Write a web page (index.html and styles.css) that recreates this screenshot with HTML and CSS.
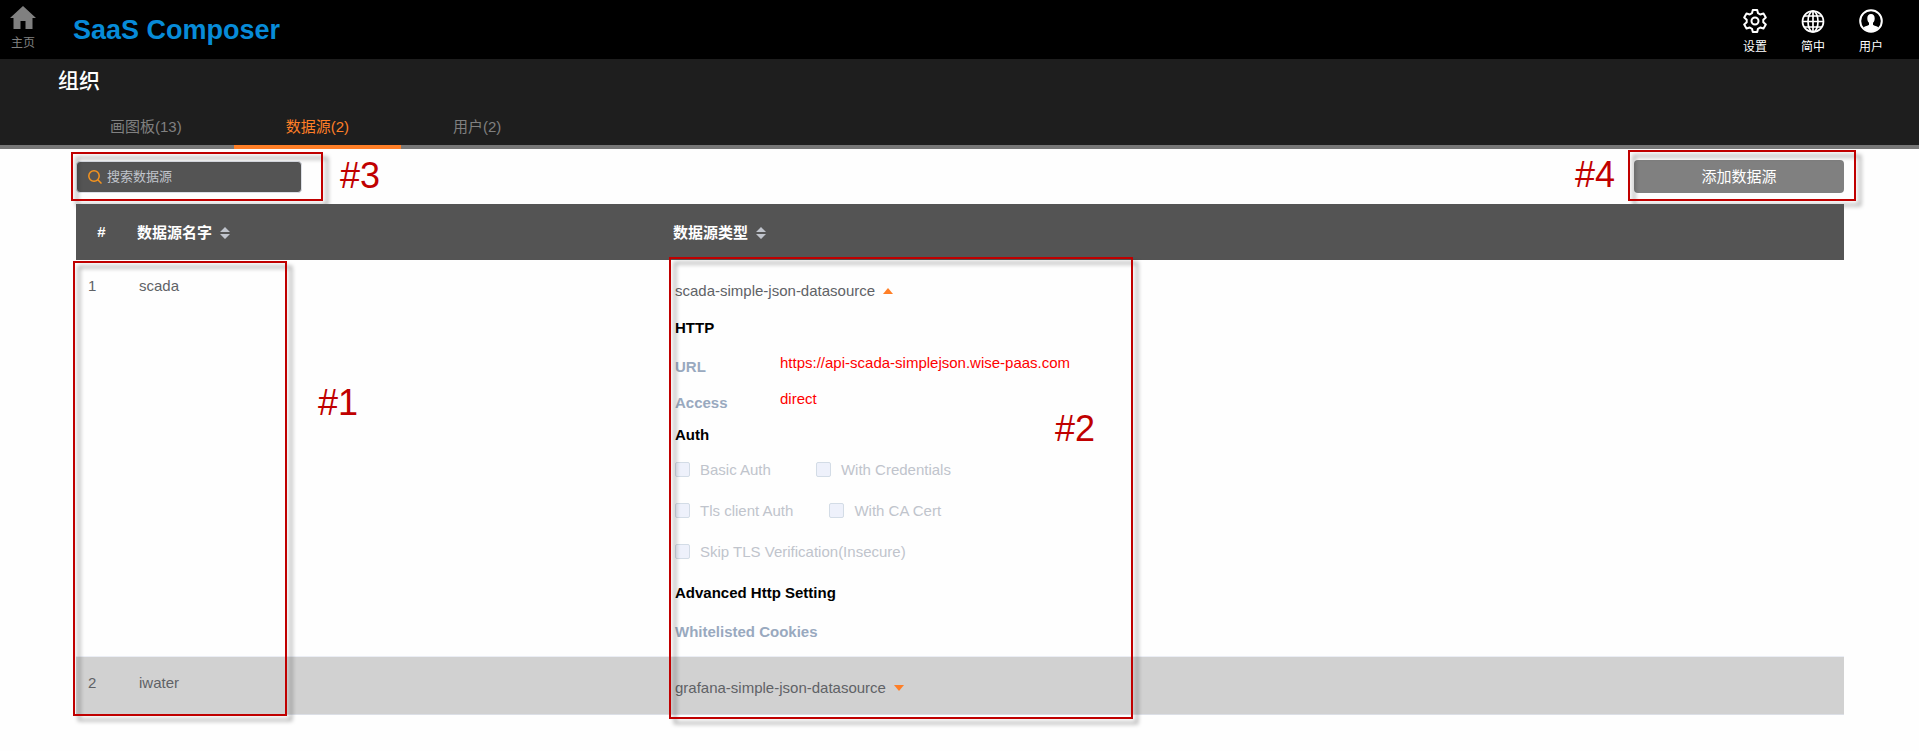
FILE: index.html
```html
<!DOCTYPE html>
<html lang="zh-CN">
<head>
<meta charset="utf-8">
<title>SaaS Composer</title>
<link rel="stylesheet" href="styles.css">
</head>
<body>
<header class="topbar">
  <a class="icon-link home" href="#">
    <svg width="26" height="23" viewBox="0 0 26 23"><path d="M13 0L0 12h3.500v11h7v-8h5v8h7V12H26z" fill="currentColor"/></svg>
    <span>主页</span>
  </a>
  <a class="brand" href="#">SaaS Composer</a>
  <nav class="actions">
    <a class="icon-link" href="#">
      <svg width="24" height="24" viewBox="0 0 24 24" fill="none" stroke="currentColor" stroke-width="2" stroke-linejoin="round"><path d="M9.800 1h4.400l.8 3.200 2.200 1.300 3.300-1 2.300 3.900-2.500 2.300v2.600l2.500 2.300-2.300 3.900-3.300-1-2.200 1.300-.8 3.200H9.800L9 19.800l-2.200-1.300-3.300 1-2.300-3.900 2.500-2.300v-2.600L1.200 8.400l2.300-3.900 3.300 1L9 4.200z"/><circle cx="12" cy="12" r="3.500"/></svg>
      <span>设置</span>
    </a>
    <a class="icon-link" href="#">
      <svg width="24" height="24" viewBox="0 0 24 24" fill="none" stroke="currentColor" stroke-width="1.700"><circle cx="12" cy="12.500" r="10.500"/><ellipse cx="12" cy="12.500" rx="5" ry="10.500"/><path d="M12 2v21M1.500 12.500h21M3.200 7h17.600M3.200 18h17.600"/></svg>
      <span>简中</span>
    </a>
    <a class="icon-link" href="#">
      <svg width="24" height="24" viewBox="0 0 24 24"><circle cx="12" cy="12" r="10.800" fill="none" stroke="currentColor" stroke-width="2"/><path d="M12 5c-2.500 0-3.700 1.700-3.700 4.200 0 2 .6 3.500 1.700 4.500v2c-1 1-4 1.200-5.500 2.800C6 21 9 22.500 12 22.500s6-1.500 7.500-4C18 16.900 15 16.700 14 15.700v-2c1.100-1 1.700-2.500 1.700-4.500C15.700 6.700 14.500 5 12 5z" fill="currentColor"/></svg>
      <span>用户</span>
    </a>
  </nav>
</header>

<section class="subhead">
  <h1 class="title">组织</h1>
  <nav class="tabs">
    <a class="tab" href="#">画图板(13)</a>
    <a class="tab active" href="#" aria-current="page">数据源(2)</a>
    <a class="tab" href="#">用户(2)</a>
  </nav>
</section>

<main class="content">
  <div class="toolbar">
    <div class="search">
      <svg class="search-icon" width="14" height="14" viewBox="0 0 14 14" fill="none" stroke="currentColor" stroke-width="1.500"><circle cx="6" cy="6" r="5.200"/><path d="M9.800 9.800L13.500 13.500"/></svg>
      <input class="search-input" type="text" placeholder="搜索数据源" aria-label="搜索数据源">
      <div class="mark mark-search"></div>
      <span class="tag tag-search">#3</span>
    </div>
    <div class="add">
      <button class="add-button" type="button">添加数据源</button>
      <div class="mark mark-add"></div>
      <span class="tag tag-add">#4</span>
    </div>
  </div>

  <div class="listing">
    <table class="sources">
      <colgroup><col class="col-index"><col class="col-name"><col></colgroup>
      <thead>
        <tr>
          <th class="index" scope="col">#</th>
          <th scope="col"><button class="sort" type="button">数据源名字<svg width="10" height="12" viewBox="0 0 10 12"><path d="M0 5l5-5 5 5zM0 7l5 5 5-5z" fill="#c0c4cc"/></svg></button></th>
          <th scope="col"><button class="sort" type="button">数据源类型<svg width="10" height="12" viewBox="0 0 10 12"><path d="M0 5l5-5 5 5zM0 7l5 5 5-5z" fill="#c0c4cc"/></svg></button></th>
        </tr>
      </thead>
      <tbody>
        <tr>
          <td class="index">1</td>
          <td class="name">scada</td>
          <td class="type">
            <button class="toggle" type="button" aria-expanded="true">scada-simple-json-datasource<svg width="10" height="6" viewBox="0 0 10 6"><path d="M0 6l5-6 5 6z" fill="#ff7f27"/></svg></button>
            <div class="details">
              <h2 class="group">HTTP</h2>
              <dl class="fields">
                <dt>URL</dt><dd>https://api-scada-simplejson.wise-paas.com</dd>
                <dt>Access</dt><dd>direct</dd>
              </dl>
              <h2 class="group">Auth</h2>
              <div class="checks">
                <div class="check-row">
                  <label class="check"><input type="checkbox" disabled>Basic Auth</label>
                  <label class="check"><input type="checkbox" disabled>With Credentials</label>
                </div>
                <div class="check-row tls">
                  <label class="check"><input type="checkbox" disabled>Tls client Auth</label>
                  <label class="check"><input type="checkbox" disabled>With CA Cert</label>
                </div>
                <div class="check-row">
                  <label class="check"><input type="checkbox" disabled>Skip TLS Verification(Insecure)</label>
                </div>
              </div>
              <h2 class="group">Advanced Http Setting</h2>
              <p class="cookies">Whitelisted Cookies</p>
            </div>
          </td>
        </tr>
        <tr class="striped">
          <td class="index">2</td>
          <td class="name">iwater</td>
          <td class="type">
            <button class="toggle" type="button" aria-expanded="false">grafana-simple-json-datasource<svg width="10" height="6" viewBox="0 0 10 6"><path d="M0 0l5 6 5-6z" fill="#ff7f27"/></svg></button>
          </td>
        </tr>
      </tbody>
    </table>
    <div class="mark mark-names"></div>
    <span class="tag tag-names">#1</span>
    <div class="mark mark-types"></div>
    <span class="tag tag-types">#2</span>
  </div>
</main>
</body>
</html>
```

FILE: styles.css
```css
* { box-sizing: border-box; }

body {
  min-height: 100vh;
  margin: 0;
  background: #fefefe;
  color: #606266;
  font: 15px/24px "Liberation Sans", "Noto Sans CJK SC", sans-serif;
}

a { color: inherit; text-decoration: none; }

button {
  margin: 0;
  padding: 0;
  border: 0;
  background: none;
  color: inherit;
  font: inherit;
}

/* Top bar */
.topbar {
  display: flex;
  align-items: flex-start;
  height: 59px;
  padding: 0 36px 0 10px;
  background: #000;
  color: #fff;
}

.icon-link {
  display: flex;
  flex-direction: column;
  align-items: center;
  gap: 6px;
  padding-top: 9px;
  font-size: 12px;
  line-height: 16px;
}

.home { padding-top: 6px; color: #808080; }

.brand {
  margin-left: 37px;
  padding-top: 10px;
  color: #078bd8;
  font: bold 27px/40px "Liberation Sans", sans-serif;
}

.actions {
  display: flex;
  gap: 34px;
  margin-left: auto;
}

/* Page heading and tabs */
.subhead {
  padding-top: 10px;
  background: #1e1e1e;
}

.title {
  margin: 0 0 7px;
  padding-left: 58px;
  color: #fff;
  font-size: 21px;
  font-weight: 500;
  line-height: 24px;
}

.tabs {
  display: flex;
  padding-left: 58px;
  color: #808080;
  box-shadow: inset 0 -4px #777;
}

.tab {
  padding: 15px 52px 6px;
  border-bottom: 4px solid transparent;
}

.tab.active {
  border-color: #ff7f27;
  color: #ff7f27;
}

/* Toolbar */
.content { padding: 0 75px 36px 76px; }

.toolbar {
  display: flex;
  justify-content: space-between;
  align-items: center;
  height: 55px;
}

.search,
.add,
.listing { position: relative; }

.search-icon {
  position: absolute;
  top: 9px;
  left: 12px;
  color: #f7941d;
}

.search-input {
  display: block;
  width: 226px;
  height: 32px;
  padding: 0 12px 0 30px;
  border: 1px solid #dcdfe6;
  border-radius: 4px;
  background: #545454;
  color: #fff;
  font: inherit;
  font-size: 13px;
}

.search-input::placeholder { color: #c0c4cc; opacity: 1; }

.add-button {
  display: block;
  width: 210px;
  height: 33px;
  border-radius: 4px;
  background: #808080;
  color: #fff;
}

/* Data source table */
.sources {
  width: 100%;
  border-collapse: separate;
  border-spacing: 0;
  table-layout: fixed;
}

.col-index { width: 51px; }
.col-name { width: 536px; }

th {
  height: 56px;
  padding: 2px 10px 0;
  background: #545454;
  color: #fff;
  text-align: left;
  vertical-align: middle;
}

th.index { padding: 0; text-align: center; }

.sort,
.toggle {
  display: flex;
  align-items: center;
  gap: 8px;
}

td {
  padding: 14px 12px;
  border-bottom: 1px solid #ebeef5;
  vertical-align: top;
}

td.type { padding: 19px 12px 12px; }

.striped td { background: #d1d1d1; border-color: #dcdfe6; }
.striped td.type { padding-bottom: 14px; }

.group {
  margin: 0;
  color: #000;
  font-size: 15px;
  line-height: 24px;
}

.details { padding-top: 13px; }

.fields {
  display: grid;
  grid-template-columns: 105px 1fr;
  row-gap: 12px;
  margin: 15px 0 8px;
}

.fields dt,
.cookies {
  color: #99a9bf;
  font-weight: bold;
}

.fields dd {
  margin: 0;
  color: #f00;
  line-height: 16px;
}

.checks {
  display: grid;
  gap: 17px;
  margin: 11px 0 17px;
}

.check-row { display: flex; gap: 45px; }
.check-row.tls { gap: 36px; }

.check {
  display: flex;
  align-items: center;
  gap: 10px;
  color: #c0c4cc;
}

.check input {
  width: 15px;
  height: 15px;
  margin: 0 0 2px;
  appearance: none;
  border: 1px solid #d3dce6;
  border-radius: 2px;
  background: #eef1fb;
}

.cookies { margin: 15px 0 0; }

/* Callout frames and numbers */
.mark {
  position: absolute;
  border: 2px solid #c00000;
  filter: drop-shadow(5px 5px 2px rgba(0, 0, 0, 0.4));
  pointer-events: none;
}

.tag {
  position: absolute;
  color: #c00000;
  font-size: 36px;
  line-height: 40px;
}

.mark-search { top: -9px; left: -5px; width: 252px; height: 49px; }
.tag-search { top: -5px; left: 264px; }

.mark-add { top: -10px; right: -12px; width: 228px; height: 51px; }
.tag-add { top: -5px; right: 229px; }

.mark-names { top: 57px; left: -3px; width: 214px; height: 455px; }
.tag-names { top: 179px; left: 242px; }

.mark-types { top: 53px; left: 593px; width: 464px; height: 462px; }
.tag-types { top: 205px; left: 979px; }
```
